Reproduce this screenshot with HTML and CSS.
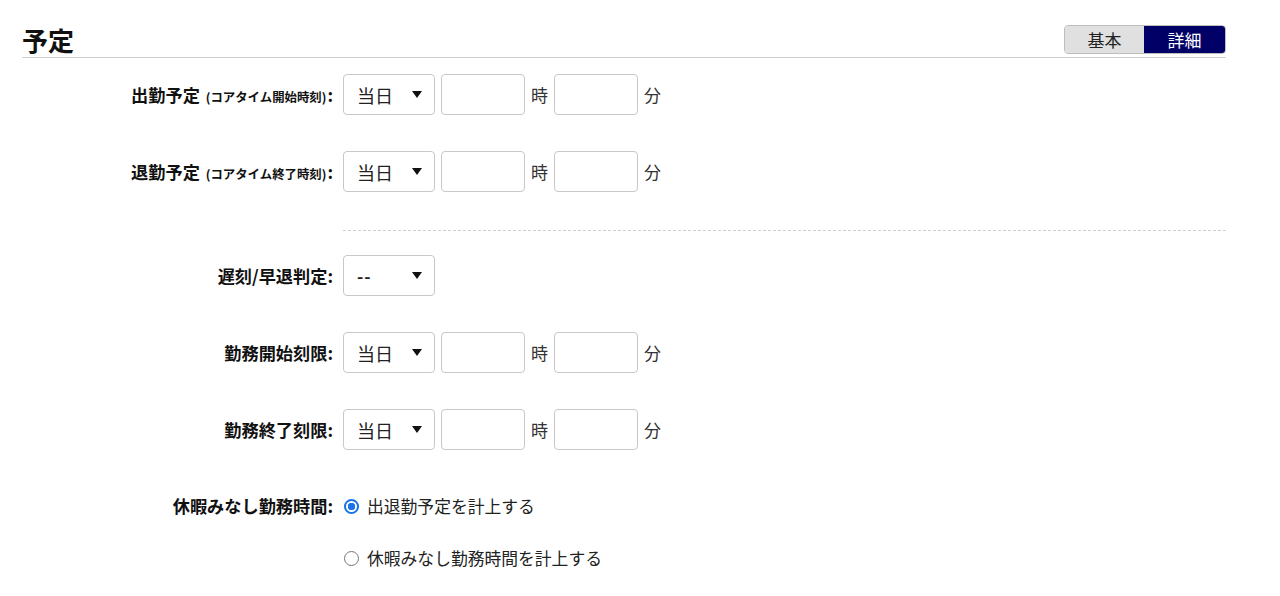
FILE: index.html
```html
<!DOCTYPE html>
<html lang="ja">
<head>
<meta charset="utf-8">
<link rel="stylesheet" href="styles.css">
</head>
<body>
<div class="page">
  <div class="header">
    <h1 class="title">予定</h1>
    <div class="toggle">
      <span class="tab">基本</span>
      <span class="tab active">詳細</span>
    </div>
  </div>

  <div class="row">
    <div class="label">出勤予定 <small>(コアタイム開始時刻)</small>:</div>
    <div class="controls">
      <div class="select"><span>当日</span><i class="caret"></i></div>
      <div class="input"></div><span class="unit">時</span>
      <div class="input"></div><span class="unit">分</span>
    </div>
  </div>

  <div class="row">
    <div class="label">退勤予定 <small>(コアタイム終了時刻)</small>:</div>
    <div class="controls">
      <div class="select"><span>当日</span><i class="caret"></i></div>
      <div class="input"></div><span class="unit">時</span>
      <div class="input"></div><span class="unit">分</span>
    </div>
  </div>

  <div class="sep-row"><div></div><div class="sep"></div></div>

  <div class="row">
    <div class="label">遅刻/早退判定:</div>
    <div class="controls">
      <div class="select"><span class="dash">--</span><i class="caret"></i></div>
    </div>
  </div>

  <div class="row">
    <div class="label">勤務開始刻限:</div>
    <div class="controls">
      <div class="select"><span>当日</span><i class="caret"></i></div>
      <div class="input"></div><span class="unit">時</span>
      <div class="input"></div><span class="unit">分</span>
    </div>
  </div>

  <div class="row">
    <div class="label">勤務終了刻限:</div>
    <div class="controls">
      <div class="select"><span>当日</span><i class="caret"></i></div>
      <div class="input"></div><span class="unit">時</span>
      <div class="input"></div><span class="unit">分</span>
    </div>
  </div>

  <div class="radio-row">
    <div class="label">休暇みなし勤務時間:</div>
    <div class="radios">
      <div class="radio-item"><span class="radio checked"></span>出退勤予定を計上する</div>
      <div class="radio-item"><span class="radio"></span>休暇みなし勤務時間を計上する</div>
    </div>
  </div>
</div>
</body>
</html>
```

FILE: styles.css
```css
* { box-sizing: border-box; }
html, body { margin: 0; padding: 0; background: #fff; }
body {
  font-family: "Noto Sans CJK JP", "Noto Sans", sans-serif;
  color: #222;
}
.page {
  width: 1226px;
  padding-left: 22px;
  padding-top: 25px;
}
.header {
  display: flex;
  justify-content: space-between;
  align-items: center;
  border-bottom: 1px solid #cfcfcf;
  padding-bottom: 3px;
}
.title {
  margin: 0;
  font-size: 26px;
  font-weight: 700;
  line-height: 29px;
  color: #111;
}
.toggle {
  display: flex;
  height: 29px;
  border: 1px solid #bdbdbd;
  border-radius: 4px;
  overflow: hidden;
}
.tab {
  width: 79px;
  display: flex;
  align-items: center;
  justify-content: center;
  font-size: 17px;
  background: #e0e0e0;
  color: #222;
}
.tab.active {
  width: 81px;
  background: #000066;
  color: #fff;
}
.row {
  display: grid;
  grid-template-columns: 321px 1fr;
  align-items: center;
  margin-top: 36px;
}
.header + .row { margin-top: 16px; }
.label {
  text-align: right;
  padding-right: 10px;
  font-size: 17.2px;
  font-weight: 700;
  color: #111;
  white-space: nowrap;
}
.label small {
  font-size: 12.4px;
  font-weight: 700;
  margin-left: 2px;
  margin-right: 1px;
}
.controls {
  display: flex;
  align-items: center;
}
.select {
  width: 92px;
  height: 41px;
  border: 1px solid #c8c8c8;
  border-radius: 4px;
  display: flex;
  align-items: center;
  justify-content: space-between;
  padding: 0 12px 0 13px;
  font-size: 18px;
  color: #222;
}
.select .dash { font-weight: 700; letter-spacing: 1px; font-size: 17px; }
.caret {
  width: 0;
  height: 0;
  border-left: 5px solid transparent;
  border-right: 5px solid transparent;
  border-top: 7px solid #111;
}
.input {
  width: 84px;
  height: 41px;
  border: 1px solid #c8c8c8;
  border-radius: 4px;
  margin-left: 6px;
}
.unit {
  font-size: 17px;
  margin-left: 6px;
  color: #333;
}
.sep-row {
  display: grid;
  grid-template-columns: 321px 1fr;
  margin-top: 38px;
}
.sep {
  border-top: 1px dashed #d0d0d0;
}
.sep-row + .row { margin-top: 24px; }
.radio-row {
  display: grid;
  grid-template-columns: 321px 1fr;
  align-items: start;
  margin-top: 45px;
}
.radio-row .label { line-height: 22px; }
.radios {
  display: flex;
  flex-direction: column;
  gap: 30px;
}
.radio-item {
  display: flex;
  align-items: center;
  font-size: 16.8px;
  line-height: 22px;
  color: #222;
}
.radio {
  width: 15px;
  height: 15px;
  border: 1px solid #777;
  border-radius: 50%;
  margin-left: 1px;
  margin-right: 8px;
  box-sizing: border-box;
}
.radio.checked {
  border: 2px solid #1a73e8;
  background: radial-gradient(circle, #1a73e8 0 3.5px, #fff 4px);
}
```
